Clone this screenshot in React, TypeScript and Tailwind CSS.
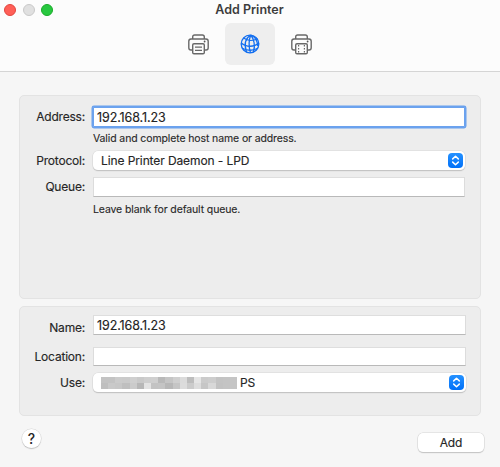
import React from "react";

const label =
  "w-[65px] shrink-0 text-right text-[12px] tracking-[-0.2px] leading-[20px] whitespace-nowrap [-webkit-text-stroke:0.15px]";
const input = "block w-full bg-white outline-none px-[3px] text-[12.5px] tracking-[-0.1px] text-[#232323] [-webkit-text-stroke:0.15px]";
const plain = "border border-t-[#dedede] border-x-[#dcdcdc] border-b-[#b9b9b9]";
const hint = "text-[10.5px] leading-[14px] tracking-[-0.12px] [-webkit-text-stroke:0.1px]";

const mosaic = [
  ["#c3c3c3", "#c3c3c3", "#cbcbcb", "#cacaca", "#cfcfcf", "#c9c9c9", "#cecece", "#cfcfcf", "#b9b9b9", "#c5c5c5", "#cfcfcf", "#dbdbdb", "#bdbdbd", "#e5e5e5", "#cbcbcb", "#cdcdcd", "#c3c3c3", "#c4c4c4", "#c5c5c5"],
  ["#bfbfbf", "#c9c9c9", "#c7c7c7", "#bfbfbf", "#cbcbcb", "#b7b7b7", "#e3e3e3", "#c3c3c3", "#c4c4c4", "#b7b7b7", "#c5c5c5", "#dcdcdc", "#cbcbcb", "#dddddd", "#c6c6c6", "#d8d8d8", "#c2c2c2", "#c4c4c4", "#c5c5c5"],
];

function PrinterIcon({ film = false }: { film?: boolean }) {
  return (
    <svg width="21" height="21" viewBox="0 0 21 21" fill="none" stroke="#686868" strokeWidth="1.4" strokeLinejoin="round">
      <path d="M4.7 5V3Q4.7 1 6.7 1h7.6Q16.3 1 16.3 3v2" />
      <path d="M4.7 16H3Q.8 16 .8 13.8V7.2Q.8 5 3 5h15Q20.2 5 20.2 7.2v6.6Q20.2 16 18 16h-1.7" />
      <rect x="4.7" y="9.7" width="11.6" height="10" rx="1.3" />
      <circle cx="16.6" cy="7.5" r="0.9" fill="#555" stroke="none" />
      {film ? (
        <path d="M7.6 11v8M13.4 11v8" strokeDasharray="1.6 1.4" strokeWidth="1.2" />
      ) : (
        <path d="M7 13.1h7M7 16.3h7" strokeWidth="1.2" />
      )}
    </svg>
  );
}

function GlobeIcon() {
  return (
    <svg width="20" height="20" viewBox="0 0 20 20" fill="none" stroke="#136ff0" strokeWidth="1.3">
      <circle cx="10" cy="10" r="8.8" />
      <path d="M10.8 1C5.8 4 3.8 10 6.5 18M10.8 1C8.7 6 8.7 13 10.5 19M10.8 1c3.2 4 4.8 11 2.5 17M10.8 1c4 1.5 6.5 5.5 7 11" />
      <path d="M3.6 4c4 3 9.7 3 14 .6M1.2 9c5 4.3 13 4.3 17.7 0M2.3 14.2c4.5 2.7 11 2.7 15.5 0" />
    </svg>
  );
}

function Stepper() {
  return (
    <span className="flex size-[15px] shrink-0 items-center justify-center rounded-[4px] bg-gradient-to-b from-[#2491ff] to-[#0070f8]">
      <svg width="9" height="11" viewBox="0 0 9 11" fill="none" stroke="white" strokeWidth="1.5" strokeLinecap="round" strokeLinejoin="round">
        <path d="M1.7 3.9 4.5 1.3l2.8 2.6M1.7 7.1l2.8 2.6 2.8-2.6" />
      </svg>
    </span>
  );
}

function Select({ children }: { children: React.ReactNode }) {
  return (
    <button className="flex h-[19px] w-full items-center justify-between rounded-[5px] bg-white pr-[2px] pl-2 text-[12px] leading-[19px] tracking-[-0.1px] shadow-[0_0_0_0.5px_#d8d8d8,0_1px_1px_#aaaaaa] [-webkit-text-stroke:0.15px]">
      {children}
      <Stepper />
    </button>
  );
}

export default function App() {
  return (
    <div className="flex h-[467px] w-[500px] flex-col overflow-hidden bg-[#f6f6f6] font-['Inter','Liberation_Sans',sans-serif] text-[#262626]">
      <header className="relative h-[72px] shrink-0 border-b border-[#d5d5d5] bg-[#fcfcfc]">
        <div className="absolute top-1 left-1 flex gap-[6.5px]">
          <i className="size-3 rounded-full border border-[#e2453e] bg-[#ff5f57]" />
          <i className="size-3 rounded-full border border-[#c9c9c9] bg-[#e0e0e0]" />
          <i className="size-3 rounded-full border border-[#1aab29] bg-[#28c840]" />
        </div>
        <h1 className="h-[23px] pr-[1px] text-center text-[12.5px] leading-[19px] font-semibold text-[#3c3c3c]">Add Printer</h1>
        <nav className="flex justify-center">
          <button className="flex h-[42px] w-[53px] items-center justify-center"><PrinterIcon /></button>
          <button className="flex h-[42px] w-[50px] items-center justify-center rounded-[6px] bg-[#eeeeee]"><GlobeIcon /></button>
          <button className="flex h-[42px] w-[53px] items-center justify-center"><PrinterIcon film /></button>
        </nav>
      </header>

      <main className="px-[19px] pt-[23px]">
        <section className="h-[204px] rounded-[5px] border border-[#e3e3e3] bg-[#ededed] pt-[11px] pr-[15px]">
          <div className="flex h-[44px] gap-2">
            <label className={label} htmlFor="address">Address:</label>
            <div className="min-w-0 flex-1">
              <input id="address" defaultValue="192.168.1.23" className={`${input} h-[20px] rounded-[1px] border border-[#6ba2ee] shadow-[0_0_0_1.5px_#6ba2ee]`} />
              <p className={`${hint} pt-[5px]`}>Valid and complete host name or address.</p>
            </div>
          </div>
          <div className="flex h-[26px] gap-2">
            <span className={label}>Protocol:</span>
            <Select><span>Line Printer Daemon - LPD</span></Select>
          </div>
          <div className="flex gap-2">
            <label className={label} htmlFor="queue">Queue:</label>
            <div className="min-w-0 flex-1">
              <input id="queue" className={`${input} ${plain} h-[20px]`} />
              <p className={`${hint} pt-[6px]`}>Leave blank for default queue.</p>
            </div>
          </div>
        </section>

        <section className="mt-[7px] h-[110px] rounded-[5px] border border-[#e3e3e3] bg-[#ededed] pt-[8px] pr-[14px]">
          <div className="flex h-[32px] gap-2">
            <label className={`${label} pt-[3px]`} htmlFor="name">Name:</label>
            <div className="flex-1"><input id="name" defaultValue="192.168.1.23" className={`${input} ${plain} h-[20px]`} /></div>
          </div>
          <div className="flex h-[26px] gap-2">
            <label className={label} htmlFor="location">Location:</label>
            <div className="flex-1"><input id="location" className={`${input} ${plain} h-[19px]`} /></div>
          </div>
          <div className="flex gap-2">
            <span className={label}>Use:</span>
            <Select>
              <span className="flex items-center gap-[3px]">
                <span className="block w-[136px]">
                  {mosaic.map((row, y) => (
                    <span key={y} className="flex h-[6px]">
                      {row.map((color, x) => <i key={x} className="flex-1" style={{ background: color }} />)}
                    </span>
                  ))}
                </span>
                PS
              </span>
            </Select>
          </div>
        </section>
      </main>

      <footer className="flex justify-between pt-[13px] pr-[16px] pl-[22px]">
        <button className="size-[19px] rounded-full bg-white text-[14px] leading-[19px] font-medium shadow-[0_0_0_0.5px_#d4d4d4,0_1px_1px_#b5b5b5]">?</button>
        <button className="mt-[4px] h-[19px] w-[66px] rounded-[5px] bg-white text-[12px] leading-[19px] tracking-[-0.1px] shadow-[0_0_0_0.5px_#d4d4d4,0_1px_1px_#b5b5b5] [-webkit-text-stroke:0.15px]">Add</button>
      </footer>
    </div>
  );
}
